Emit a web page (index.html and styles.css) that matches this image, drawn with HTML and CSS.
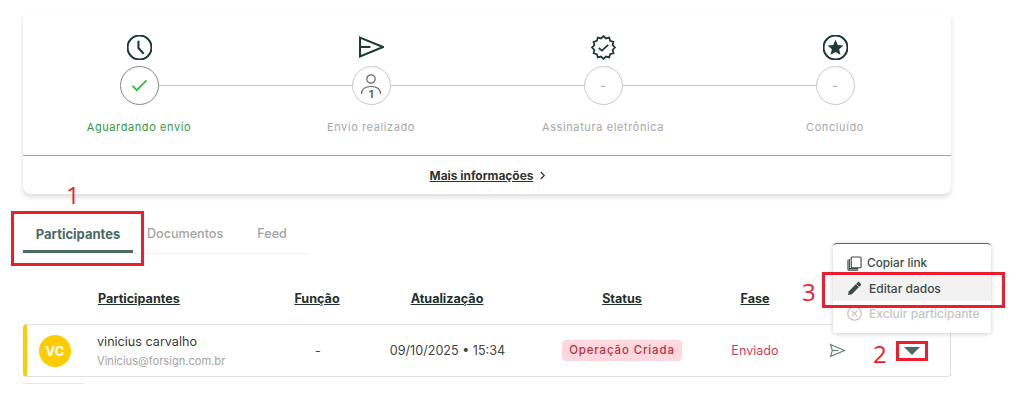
FILE: index.html
```html
<!DOCTYPE html>
<html lang="pt-BR">
<head>
    <meta charset="UTF-8" />
    <title>Participantes</title>
    <link rel="stylesheet" href="styles.css">
</head>
<body>
    <div class="page">
        <section class="card">
            <div class="steps">
                <div class="step done">
                    <svg class="top-icon" viewBox="0 0 24 24"><circle cx="12" cy="12" r="11.5"/><path d="M11 5.5V12.5L16 18"/></svg>
                    <div class="track">
                        <span class="line none"></span>
                        <span class="dot"><svg class="check" viewBox="0 0 18 14"><path d="M1.5 7.5L6 12L16.5 1.5"/></svg></span>
                        <span class="line"></span>
                    </div>
                    <p class="label">Aguardando envio</p>
                </div>
                <div class="step">
                    <svg class="top-icon" viewBox="0 0 24 24"><path d="M1 2.5L23 11.5L1 20.5Z"/><path d="M1 11.5H11"/></svg>
                    <div class="track">
                        <span class="line"></span>
                        <span class="dot">
                            <svg class="person" viewBox="0 0 24 26"><circle cx="12" cy="6" r="4.2"/><path d="M2.5 21C2.5 16 6 13.5 12 13.5S21.500 16 21.500 21"/><rect class="knock" x="7" y="15" width="10" height="11"/><text x="12" y="24.500">1</text></svg>
                        </span>
                        <span class="line"></span>
                    </div>
                    <p class="label">Envio realizado</p>
                </div>
                <div class="step">
                    <svg class="top-icon thin" viewBox="0 0 24 24"><path d="M23 12L20.690 14.330L21.530 17.500L18.360 18.360L17.500 21.530L14.330 20.690L12 23L9.670 20.690L6.500 21.530L5.640 18.360L2.470 17.500L3.310 14.330L1 12L3.310 9.670L2.470 6.500L5.640 5.640L6.500 2.470L9.670 3.310L12 1L14.330 3.310L17.500 2.470L18.360 5.640L21.530 6.500L20.690 9.670Z"/><path d="M7.500 12.500L10.500 15L16.500 9.500"/></svg>
                    <div class="track">
                        <span class="line"></span>
                        <span class="dot">-</span>
                        <span class="line"></span>
                    </div>
                    <p class="label">Assinatura eletrônica</p>
                </div>
                <div class="step">
                    <svg class="top-icon" viewBox="0 0 24 24"><circle cx="12" cy="12" r="11.5"/><path class="solid" d="M12 4.500L14.200 9.500L19.500 10L15.500 13.600L16.700 19L12 16.200L7.300 19L8.500 13.600L4.500 10L9.800 9.500Z"/></svg>
                    <div class="track">
                        <span class="line"></span>
                        <span class="dot">-</span>
                        <span class="line none"></span>
                    </div>
                    <p class="label">Concluído</p>
                </div>
            </div>
            <div class="card-foot">
                <a class="more">Mais informações</a>
                <svg class="chev" viewBox="0 0 8 10"><path d="M2 1L6 5L2 9"/></svg>
            </div>
        </section>

        <nav class="tabs">
            <a class="tab active">Participantes</a>
            <a class="tab">Documentos</a>
            <a class="tab">Feed</a>
        </nav>

        <div class="cols head">
            <span></span>
            <span class="left">Participantes</span>
            <span>Função</span>
            <span>Atualização</span>
            <span>Status</span>
            <span>Fase</span>
        </div>

        <div class="cols row">
            <span class="avatar">VC</span>
            <div class="who">
                <p class="name">vinicius carvalho</p>
                <p class="mail">Vinicius@forsign.com.br</p>
            </div>
            <span>-</span>
            <span>09/10/2025 • 15:34</span>
            <span><em class="badge">Operação Criada</em></span>
            <span class="phase">Enviado</span>
            <div class="actions">
                <svg class="send" viewBox="0 0 18 16"><path d="M1.500 1.500L16.500 8L1.500 14.500L3.500 8Z"/><path d="M3.500 8H10"/></svg>
                <span class="caret"></span>
            </div>
        </div>
        <div class="stub"></div>

        <div class="menu">
            <div class="item copy">
                <svg viewBox="0 0 16 16"><rect x="4.500" y="1" width="10.500" height="11.500" rx="1"/><path d="M1 4V14C1 14.600 1.400 15 2 15H12"/><path d="M2.500 3V13.500H12"/></svg>
                Copiar link
            </div>
            <div class="item hover">
                <svg viewBox="0 0 16 16"><path class="solid" d="M1 15L2 10.800L11.500 1.300C12 .8 12.700 .8 13.200 1.300L14.700 2.800C15.200 3.300 15.200 4 14.700 4.500L5.200 14Z"/><path class="cut" d="M10 3.500L12.800 6.300"/></svg>
                Editar dados
            </div>
            <div class="item off">
                <svg viewBox="0 0 16 16"><circle cx="8" cy="8" r="7.200"/><path d="M5 5L11 11M11 5L5 11"/></svg>
                Excluir participante
            </div>
        </div>

        <div class="mark box-one"></div>
        <div class="mark box-two"></div>
        <div class="mark box-three"></div>
        <span class="num num-one">1</span>
        <span class="num num-two">2</span>
        <span class="num num-three">3</span>
    </div>
</body>
</html>
```

FILE: styles.css
```css
*{margin:0;padding:0;box-sizing:border-box;}
html,body{height:100%;overflow:hidden;background:#fff;}
body{font-family:"Inter","Liberation Sans",sans-serif;font-size:12.600px;color:#333;}
svg{display:block;flex:none;}

.page{position:relative;width:1024px;height:401px;padding:14px 0 0 23px;overflow:hidden;}

/* card with the steps */
.card{width:928px;height:180px;background:#fff;border-radius:0 0 8px 8px;box-shadow:0 3px 5px rgba(0,0,0,.14);display:flex;flex-direction:column;}
.steps{display:grid;grid-template-columns:repeat(4,1fr);padding-top:21px;height:142px;border-bottom:1px solid #98a5a3;}
.step{display:flex;flex-direction:column;align-items:center;}
.top-icon{width:25px;height:25px;fill:none;stroke:#1d3a36;stroke-width:2;}
.top-icon.thin{stroke-width:1.7;}
.top-icon .solid{fill:#1d3a36;stroke:none;}
.track{display:flex;align-items:center;width:100%;margin-top:6px;}
.line{flex:1;height:1px;background:#c6c6c6;}
.line.none{background:none;}
.dot{width:39px;height:39px;border-radius:50%;border:1px solid #c9c9c9;display:flex;align-items:center;justify-content:center;color:#aaa;font-size:12px;}
.done .dot{border-color:#7e8c8a;}
.check{width:17px;height:13px;fill:none;stroke:#2cc13d;stroke-width:2;}
.person{width:24px;height:26px;fill:none;stroke:#666;stroke-width:1.200;}
.person .knock{fill:#fff;stroke:none;}
.person text{fill:#4a7187;stroke:none;font-size:11px;font-weight:700;text-anchor:middle;font-family:"Inter",sans-serif;}
.label{margin-top:14px;font-size:11px;line-height:16px;letter-spacing:.6px;color:#a8a8a8;}
.done .label{color:#329a3e;}
.card-foot{flex:1;display:flex;align-items:center;justify-content:center;gap:6px;padding-left:2px;}
.more{font-size:11.900px;font-weight:700;color:#333;text-decoration:underline;}
.chev{width:7px;height:9px;fill:none;stroke:#333;stroke-width:1.400;}

/* tabs */
.tabs{display:flex;gap:34px;width:284px;margin-top:22px;border-bottom:1px solid #f0f0f0;height:38px;}
.tab{flex:none;padding:9px 0 7px;line-height:18px;height:37px;color:#a3a3a3;font-weight:500;}
.tab.active{width:110px;margin-right:-20px;text-align:center;font-size:13px;color:#4a6a62;font-weight:700;border-bottom:3px solid #4a6a62;}

/* table */
.cols{display:grid;grid-template-columns:75px 179px 80px 180px 170px 96px 1fr;align-items:center;justify-items:center;width:928px;}
.head{margin-top:36px;line-height:18px;font-weight:700;color:#22312f;text-decoration:underline;}
.head .left{justify-self:start;}
.row{margin-top:16px;height:53px;grid-template-columns:70px 181px 80px 179px 170px 96px 1fr;border:1px solid #e0e0e0;border-left:4px solid #fc0;border-radius:4px;color:#444;}
.avatar{width:32px;height:32px;border-radius:50%;background:#fc0;color:#fff;font-weight:700;font-size:13px;display:flex;align-items:center;justify-content:center;margin-right:14px;}
.who{justify-self:start;}
.name{line-height:18px;color:#3b3b3b;}
.mail{margin-top:2px;font-size:11.100px;line-height:16px;color:#a3a3a3;}
.badge{display:block;width:120px;height:21px;line-height:21px;text-align:center;border-radius:4px;background:#ffd7dc;color:#b5303f;font-style:normal;font-size:11.400px;font-weight:500;letter-spacing:.9px;}
.phase{color:#d2424e;}
.actions{justify-self:stretch;display:flex;align-items:center;padding-left:26px;gap:58px;}
.send{width:17px;height:15px;fill:none;stroke:#5d7d76;stroke-width:1.200;}
.caret{width:0;height:0;border-left:8px solid transparent;border-right:8px solid transparent;border-top:8px solid #4a6a62;}
.stub{width:61px;height:1px;margin-top:6px;background:#e6e6e6;}

/* dropdown menu */
.menu{position:absolute;left:833px;top:243px;width:158px;height:90px;padding-top:6px;background:#fff;border-top:1px solid #4a6a62;border-radius:4px;box-shadow:0 1px 5px rgba(0,0,0,.2);font-size:12px;font-weight:500;color:#3d4a48;}
.item{display:flex;align-items:center;gap:7px;height:25.500px;padding-left:14px;}
.item.copy{gap:5px;padding-top:1px;font-size:11.800px;}
.item svg{width:15px;height:15px;fill:none;stroke:#3d4a48;stroke-width:1.200;}
.item .solid{fill:#3d4a48;stroke:none;}
.item .cut{stroke:#f2f2f2;stroke-width:.8;}
.item.hover{background:#f2f2f2;}
.item.off{color:#c4c4c4;}
.item.off svg{stroke:#c4c4c4;stroke-width:1.300;}

/* red marks drawn on the screenshot */
.mark{position:absolute;border:3px solid #ed1c2e;}
.box-one{left:11px;top:211px;width:133px;height:55px;}
.box-two{left:896px;top:341px;width:32px;height:20px;}
.box-three{left:822px;top:272px;width:183px;height:36px;}
.num{position:absolute;color:#ed1c2e;font-family:"Open Sans",sans-serif;font-size:24px;line-height:24px;}
.num-one{left:66px;top:183px;}
.num-two{left:873px;top:342px;}
.num-three{left:802px;top:280px;}
```
